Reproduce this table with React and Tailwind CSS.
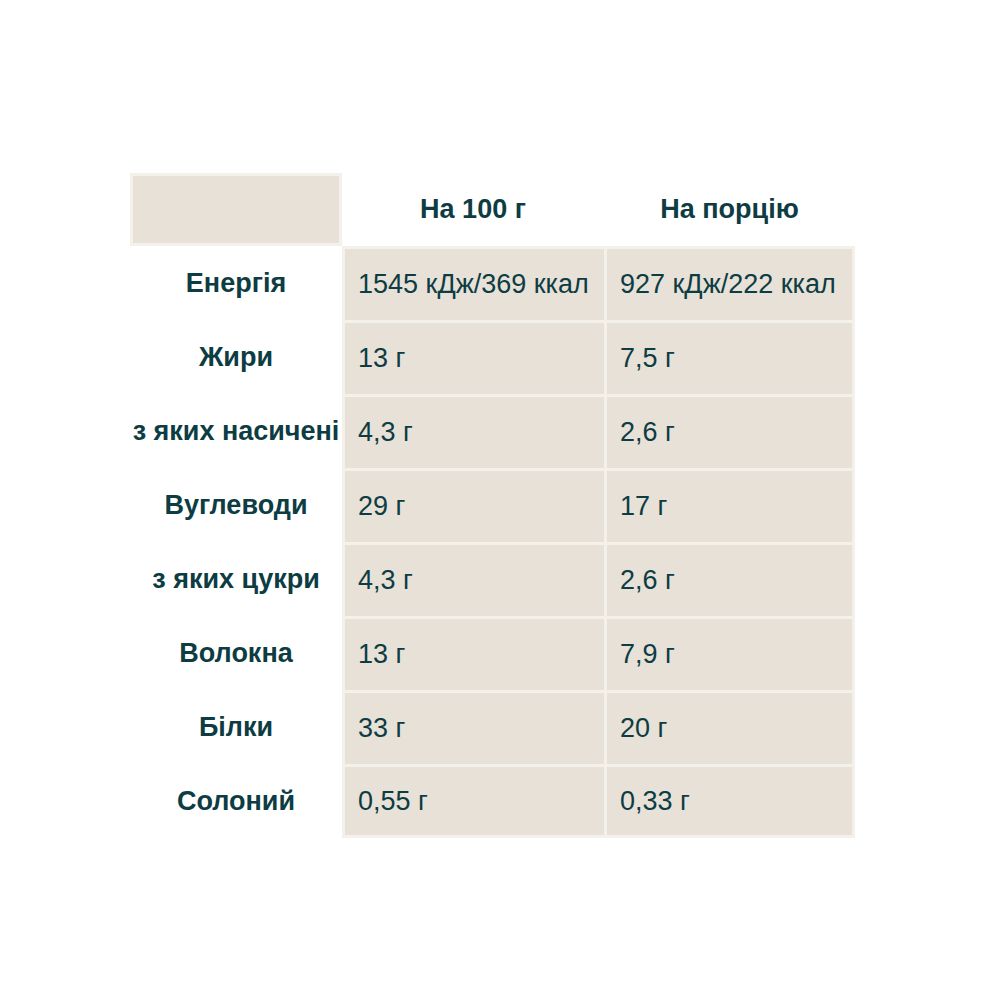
import React from 'react';

const rows = [
  ['Енергія', '1545 кДж/369 ккал', '927 кДж/222 ккал'],
  ['Жири', '13 г', '7,5 г'],
  ['з яких насичені', '4,3 г', '2,6 г'],
  ['Вуглеводи', '29 г', '17 г'],
  ['з яких цукри', '4,3 г', '2,6 г'],
  ['Волокна', '13 г', '7,9 г'],
  ['Білки', '33 г', '20 г'],
  ['Солоний', '0,55 г', '0,33 г'],
];

const App = () => {
  return (
    <div className="w-[1000px] h-[1000px] bg-white pl-[130px] pt-[173px] text-[#0d3c43] font-['Liberation_Sans',Arial,sans-serif]">
      <div className="grid grid-cols-[212px_262px_251px]">
        {/* Header row */}
        <div className="h-[73px] bg-[#e8e1d8] border-[3px] border-[#f4f0ea]" />
        <div className="h-[73px] flex items-center justify-center text-[27px] font-bold">На 100 г</div>
        <div className="h-[73px] flex items-center justify-center text-[27px] font-bold">На порцію</div>

        {rows.map((row, i) => {
          const last = i === rows.length - 1;
          return (
            <React.Fragment key={i}>
              <div className="h-[74px] flex items-center justify-center text-[27px] font-bold whitespace-nowrap">
                {row[0]}
              </div>
              <div className={`h-[74px] flex items-center pl-[13px] bg-[#e8e1d8] border-t-[3px] border-l-[3px] border-[#f4f0ea] text-[27px] whitespace-nowrap ${last ? 'border-b-[3px]' : ''}`}>
                {row[1]}
              </div>
              <div className={`h-[74px] flex items-center pl-[13px] bg-[#e8e1d8] border-t-[3px] border-l-[3px] border-r-[3px] border-[#f4f0ea] text-[27px] whitespace-nowrap ${last ? 'border-b-[3px]' : ''}`}>
                {row[2]}
              </div>
            </React.Fragment>
          );
        })}
      </div>
    </div>
  );
};

export default App;
